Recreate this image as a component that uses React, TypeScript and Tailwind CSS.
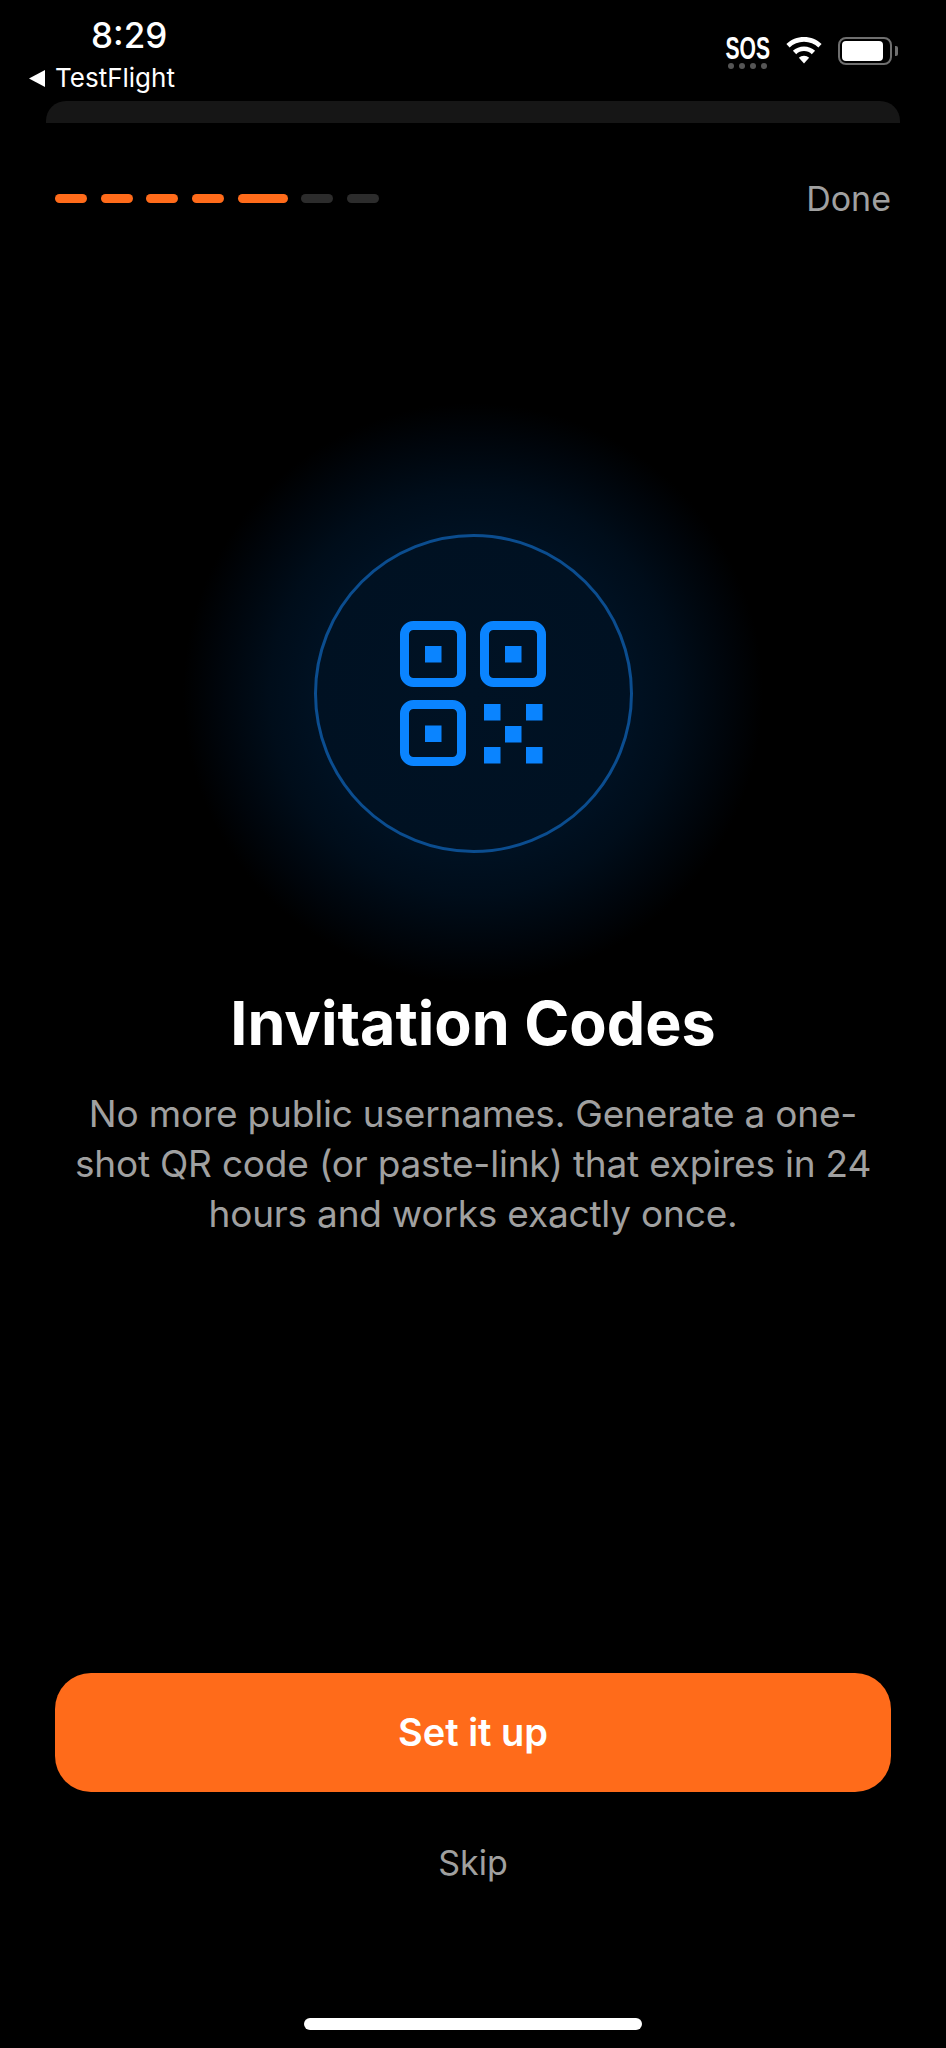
const FONT = "font-['Inter','Liberation_Sans',sans-serif]";

const QrIcon = () => (
  <svg width="146" height="145" viewBox="0 0 146 145" fill="none">
    <rect x="4.5" y="4.5" width="57" height="57" rx="9" stroke="#0a84ff" strokeWidth="9" />
    <rect x="84.5" y="4.5" width="57" height="57" rx="9" stroke="#0a84ff" strokeWidth="9" />
    <rect x="4.5" y="83.5" width="57" height="57" rx="9" stroke="#0a84ff" strokeWidth="9" />
    <g fill="#0a84ff">
      <rect x="25" y="25" width="16.5" height="16.5" />
      <rect x="105" y="25" width="16.5" height="16.5" />
      <rect x="25" y="104.5" width="16.5" height="16.5" />
      <rect x="84" y="83" width="16.5" height="16.5" />
      <rect x="126" y="83" width="16.5" height="16.5" />
      <rect x="105" y="105" width="16.5" height="16.5" />
      <rect x="84" y="126" width="16.5" height="16.5" />
      <rect x="126" y="126" width="16.5" height="16.5" />
    </g>
  </svg>
);

const WifiIcon = () => (
  <svg width="36" height="27" viewBox="0 0 36 27" fill="#fff">
    <path d="M18 0C11.200 0 5 2.600.4 7l3.200 3.400C7.300 6.800 12.400 4.700 18 4.700s10.700 2.100 14.400 5.700L35.600 7C31 2.600 24.800 0 18 0z" />
    <path d="M18 9.400c-4.300 0-8.200 1.700-11.100 4.400l3.300 3.400c2-1.900 4.800-3.100 7.800-3.100s5.800 1.200 7.800 3.100l3.300-3.400C26.200 11.100 22.300 9.400 18 9.400z" />
    <path d="M18 18.700c-2 0-3.800.8-5.100 2L18 26.500l5.100-5.800c-1.300-1.200-3.100-2-5.100-2z" />
  </svg>
);

const BatteryIcon = () => (
  <div className="flex items-center gap-[3px]">
    <div className="flex h-[28px] w-[54px] items-center rounded-[8px] border-2 border-[#6f6f6f] p-[2px]">
      <div className="h-full w-[41px] rounded-[4px] bg-white" />
    </div>
    <div className="h-[10px] w-[3px] rounded-r-[2px] bg-[#6f6f6f]" />
  </div>
);

const StatusBar = () => (
  <div className="flex h-[101px] justify-between">
    <div className="flex flex-col pl-[29px]">
      <div className="ml-[62px] mt-[14px] h-[42px] text-[35px] leading-[42px] font-medium text-white">
        8:29
      </div>
      <div className="mt-[7px] flex items-center gap-[10px]">
        <svg width="16" height="17" viewBox="0 0 16 17" fill="#fff">
          <path d="M16 0v17L0 8.500z" />
        </svg>
        <span className="text-[26px] leading-[30px] text-white">TestFlight</span>
      </div>
    </div>
    <div className="flex items-start pr-[48px] pt-[37px]">
      <div className="mr-[16px] flex w-[45px] flex-col items-center">
        <span className="scale-x-[0.66] font-['Liberation_Sans',sans-serif] text-[32px] leading-[23px] font-bold text-white">
          SOS
        </span>
        <div className="mt-[3px] flex gap-[5px]">
          <span className="h-[6px] w-[6px] rounded-full bg-[#555555]" />
          <span className="h-[6px] w-[6px] rounded-full bg-[#555555]" />
          <span className="h-[6px] w-[6px] rounded-full bg-[#555555]" />
          <span className="h-[6px] w-[6px] rounded-full bg-[#555555]" />
        </div>
      </div>
      <div className="mr-[16px]">
        <WifiIcon />
      </div>
      <BatteryIcon />
    </div>
  </div>
);

const steps = [false, false, false, false, true, null, null];

export default function App() {
  return (
    <div className={`${FONT} flex h-[2048px] w-[946px] flex-col overflow-hidden bg-black`}>
      <StatusBar />
      <div className="mx-[46px] h-[22px] rounded-t-[20px] bg-[#161616]" />

      <div className="mt-[55px] flex h-[40px] items-center justify-between px-[55px]">
        <div className="flex gap-[13.66px]">
          {steps.map((s, i) => (
            <div
              key={i}
              className={`h-[9px] rounded-full ${s ? 'w-[50px]' : 'w-[32px]'} ${s === null ? 'bg-[#2c2c2c]' : 'bg-[#ff6b1a]'}`}
            />
          ))}
        </div>
        <span className="pt-[2px] text-[34px] leading-[40px] text-[#a0a0a0]">Done</span>
      </div>

      <div className="mt-[185px] flex h-[580px] items-center justify-center bg-[radial-gradient(circle_closest-side,#001224_0%,#001122_55%,#000d1a_70%,#00050b_88%,#000000_100%)]">
        <div className="flex h-[319px] w-[319px] items-center justify-center rounded-full border-[3px] border-[#0b4d8f]">
          <QrIcon />
        </div>
      </div>

      <h1 className="mt-[4px] text-center text-[61px] leading-[72px] font-bold text-white">
        Invitation Codes
      </h1>
      <p className="mt-[30px] text-center text-[37px] leading-[50px] tracking-[-0.2px] text-[#a0a0a0]">
        No more public usernames. Generate a one-
        <br />
        shot QR code (or paste-link) that expires in 24
        <br />
        hours and works exactly once.
      </p>

      <div className="flex-1" />

      <button className="mx-[55px] flex h-[119px] items-center justify-center rounded-[36px] bg-[#ff6b1a] text-[38px] font-semibold text-white">
        Set it up
      </button>
      <div className="mt-[51px] text-center text-[34px] leading-[40px] text-[#a0a0a0]">
        Skip
      </div>
      <div className="mb-[18px] mt-[135px] h-[12px] w-[338px] self-center rounded-full bg-white" />
    </div>
  );
}
